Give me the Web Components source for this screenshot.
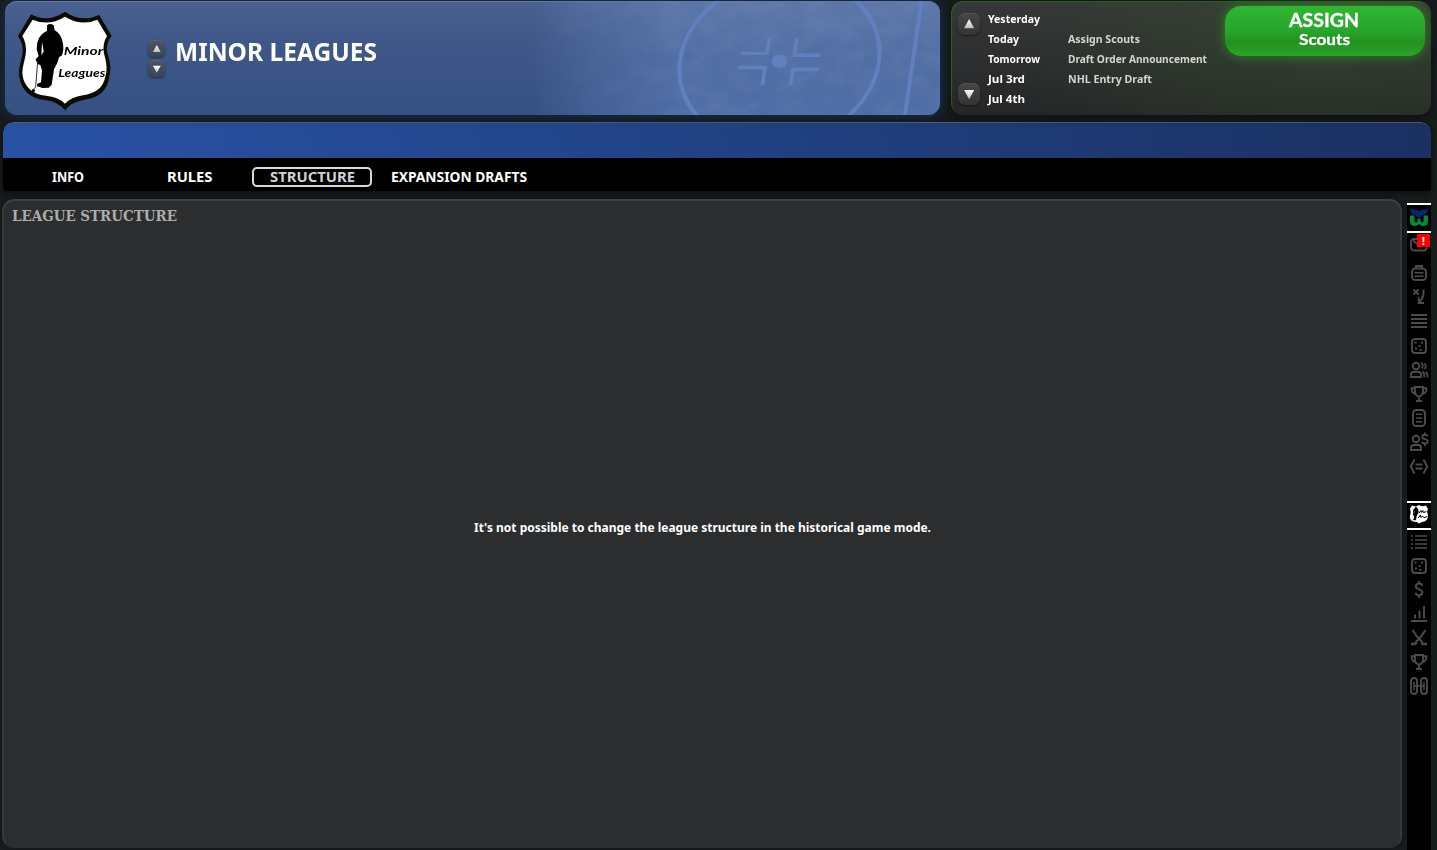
<!DOCTYPE html>
<html lang="en">
<head>
<meta charset="utf-8">
<title>Minor Leagues</title>
<style>
  html, body { margin: 0; height: 100%; overflow: hidden; background: #171c1d; }
  body { font-family: "Noto Sans", "Open Sans", sans-serif; color: #fff; }
</style>
</head>
<body>
<league-screen></league-screen>

<script>
const shield = `
  <path d="M63 28 Q112 55 165 20 Q218 55 267 29 L305 93 Q285 118 292 145 C299 165 305 190 298 214 C292 262 260 280 220 285 Q184 291 166 316 Q145 290 105 285 C60 281 33 253 28 215 C23 185 39 160 38 132 Q37 112 24 94 Z" fill="#0c0b02"/>
  <path d="M68 44 Q116 65 165 35 Q214 65 262 44 L291 93 Q276 117 282 146 C288 166 293 190 287 211 C280 252 253 266 219 271 Q183 277 165 296 Q144 275 108 272 C68 270 43 244 38 213 C34 186 49 160 48 132 Q47 110 37 93 Z" fill="#fff"/>
  <path d="M111 61 Q120 53 131 61 L134 76 Q153 86 158 112 Q163 131 156 151 L147 157 Q144 175 132 193 L125 239 L116 248 L98 249 L81 244 L82 236 L93 232 L96 196 L91 180 L82 177 L77 163 L86 153 L80 133 Q79 92 111 77 Z" fill="#000"/>
  <path d="M96 110 L94 151 L101 139 Z" fill="#fff"/>
  <path d="M83 170 L77 246 L70 253" fill="none" stroke="#333" stroke-width="3"/>
  <circle cx="70" cy="257" r="5"/>`;

const trophy = '<path d="M8 5h8v5q-.5 4-4 4.500q-3.500-.5-4-4.500zM7.500 6.200H4.500q0 5.300 5 6M16.500 6.200h3q0 5.300-5 6M12 14.500V19M9 19h6"/>';
const dice = '<rect x="5" y="5" width="14" height="14" rx="3"/><path d="M7.500 8.500h2M14 8.500h2M11.500 12h2M8 14.500h2M12.500 16h2"/>';

const icons = {
  mail: '<rect x="4" y="6" width="15.500" height="11.500" rx="3"/><path d="M6 7.500l6 5 6-5"/>',
  clipboard: '<path d="M9 7.500V5h6v2.500"/><rect x="5" y="7.500" width="14" height="11.500" rx="3.500"/><path stroke-width="1.500" d="M7.500 11.700h9M7.500 15.300h9"/>',
  tactics: '<path d="M6.500 4.500l5 5M11.500 4.500l-5 5M16.500 4.500q.8 8-4 12.500M11.800 12.500V18H17"/>',
  lines: '<path d="M4 6h16M4 10h16M4 14h16M4 18h16"/>',
  dice,
  people: '<circle cx="9" cy="8" r="3.300"/><path d="M4 19v-2.200q0-3 3-3h4q3 0 3 3V19z"/><path stroke-width="1.700" d="M13.700 4.800q3.500 1.200 1 5.700M17.200 5.500q3 2 .3 5.500M15.500 13.500q2.300 2 1.800 6M18.500 14q2.500 2 2 5.500"/>',
  trophy,
  doc: '<rect x="6" y="4" width="12" height="16" rx="3.500"/><path stroke-width="1.500" d="M9 8.300h6M9 12h6M9 15.700h6"/>',
  agent: '<circle cx="9" cy="9" r="3.200"/><path d="M4 20v-2.300q0-2.700 3-2.700h4q3 0 3 2.700V20zM20.500 6.200q-.5-1.500-2.600-1.500-2.600 0-2.600 2.200c0 3 5.300 1.300 5.300 4.400 0 2.800-5 2.900-5.600.4M17.900 2.500v2M17.900 13.500v2.500"/>',
  salary: '<path d="M7.500 5.500L3.800 12.500l3.700 7M16.500 5.500l3.700 7-3.700 7M8.500 10.500h7M8.500 14.500h7"/>',
  bullets: '<path stroke-width="1.700" d="M4 6h2M8 6h12M4 10h2M8 10h12M4 14h2M8 14h12M4 18h2M8 18h12"/>',
  dollar: '<path d="M15.200 7.800q-.3-2.300-3.200-2.300t-3.200 2.700c0 4 6.500 2.500 6.500 6.300 0 3.500-6.400 3.500-6.800.2M12 3v2.500M12 17.300V20"/>',
  chart: '<path d="M8 12.500v4M12.500 8.500v8M17 4v12.500M4 19h16"/>',
  sticks: '<path d="M5.500 4q4 7 10 12.500M18.500 4q-4 7-10 12.500"/><path stroke-width="2.600" d="M4 18h4.200l1.500-1.500M20 18h-4.200l-1.500-1.500"/>',
  rink: '<rect x="4" y="4" width="6" height="16" rx="3"/><rect x="14" y="4" width="6" height="16" rx="3"/><path stroke-width="1.500" d="M7 8v8M17 8v8M7 12h10"/>'
};

// One line of text, squeezed or stretched to the width attribute
class GameText extends HTMLElement {
  constructor() {
    super();
    this.attachShadow({ mode: 'open' });
  }

  connectedCallback() {
    const size = this.getAttribute('size') || 11;
    const width = Number(this.getAttribute('width'));
    this.shadowRoot.innerHTML = `
      <style>
        :host { display: inline-block; width: ${width}px; white-space: nowrap; flex: none; }
        span { display: inline-block; font-size: ${size}px; font-weight: bold; transform-origin: 0 50%; }
      </style>
      <span><slot></slot></span>
    `;
    const span = this.shadowRoot.querySelector('span');
    const natural = span.getBoundingClientRect().width;
    if (natural) span.style.transform = `scaleX(${width / natural})`;
  }
}

class StepButton extends HTMLElement {
  constructor() {
    super();
    this.attachShadow({ mode: 'open' });
  }

  connectedCallback() {
    const d = this.hasAttribute('down') ? 'M5 6h10L10 15z' : 'M5 14h10L10 5z';
    this.shadowRoot.innerHTML = `
      <style>
        :host {
          display: flex; align-items: center; justify-content: center;
          width: var(--step, 22px); height: var(--step, 22px);
          border-radius: 32%;
          background: linear-gradient(var(--step-top, #464646), var(--step-bottom, #343434));
          box-shadow: 0 1px 2px rgba(0, 0, 0, .55), inset 0 1px 0 rgba(255, 255, 255, .08);
        }
        svg { width: 92%; height: 92%; }
      </style>
      <svg viewBox="0 0 20 20">
        <defs><linearGradient id="g" x2="0" y2="1"><stop stop-color="#fff"/><stop offset="1" stop-color="#bbb"/></linearGradient></defs>
        <path d="${d}" fill="url(#g)"/>
      </svg>
    `;
  }
}

class LeagueHeader extends HTMLElement {
  constructor() {
    super();
    this.attachShadow({ mode: 'open' });
    this.shadowRoot.innerHTML = `
      <style>
        :host {
          display: grid; box-sizing: border-box; width: 935px; height: 114px;
          border-radius: 12px; overflow: hidden;
          background: linear-gradient(#4a6191, #3f5889 35%, #375083);
          box-shadow: 0 0 12px #1b3058, inset 0 1px 0 #6478a1;
        }
        :host > * { grid-area: 1 / 1; }
        .ice { width: 935px; height: 114px; }
        .content { display: flex; align-items: flex-start; z-index: 1; }
        .logo { width: 110px; height: 110px; margin: 4px 0 0 5px; }
        .logo text { font: italic bold 33px Lato, sans-serif; fill: #000; }
        .steps {
          display: flex; flex-direction: column; gap: 3px; margin: 39px 0 0 28px;
          --step: 17px; --step-top: #4d5566; --step-bottom: #3b4455;
        }
        .title { margin: 33px 0 0 10px; line-height: 34px; }
      </style>
      <svg class="ice" viewBox="0 0 935 114">
        <defs>
          <linearGradient id="fade"><stop offset=".56" stop-color="#000"/><stop offset=".62" stop-color="#777"/><stop offset=".72" stop-color="#fff"/></linearGradient>
          <mask id="m"><rect width="935" height="114" fill="url(#fade)"/></mask>
          <linearGradient id="sheet" x2="0" y2="1"><stop stop-color="#5c76a8"/><stop offset=".5" stop-color="#516ea5"/><stop offset="1" stop-color="#4e6ca6"/></linearGradient>
          <filter id="scuff" x="0" y="0" width="100%" height="100%">
            <feTurbulence type="fractalNoise" baseFrequency=".04 .06" numOctaves="6" seed="8"/>
            <feColorMatrix values="0 0 0 0 .46  0 0 0 0 .54  0 0 0 0 .66  1 0 0 0 -.3"/>
          </filter>
        </defs>
        <g mask="url(#m)">
          <rect width="935" height="114" fill="url(#sheet)"/>
          <rect width="935" height="114" filter="url(#scuff)" opacity=".15"/>
          <g fill="none" stroke="#6180bf" stroke-width="4">
            <ellipse rx="99.500" ry="84" transform="translate(774.500 60.300) skewX(-7)"/>
            <path stroke-width="3.600" d="M735.800 52.300H762L764.500 36.500M733.500 66.500H760L757.500 84M815.500 54.300H789.500L792 37M813.500 68.500H788L785.500 84"/>
            <path d="M916.500 0L900 114"/>
          </g>
          <ellipse cx="774.500" cy="60.300" rx="7.800" ry="6.700" fill="#6180bf"/>
        </g>
      </svg>
      <div class="content">
        <svg class="logo" viewBox="0 0 330 330">
          ${shield}
          <text x="161" y="151" textLength="119" lengthAdjust="spacingAndGlyphs">Minor</text>
          <text x="145" y="217" textLength="141" lengthAdjust="spacingAndGlyphs">Leagues</text>
        </svg>
        <div class="steps"><step-button></step-button><step-button down></step-button></div>
        <game-text class="title" size="25.500" width="202">MINOR LEAGUES</game-text>
      </div>
    `;
  }
}

class ScheduleCard extends HTMLElement {
  constructor() {
    super();
    this.attachShadow({ mode: 'open' });
    // day, its width, event, its width
    const days = [
      ['Yesterday', 52, '', 0],
      ['Today', 31, 'Assign Scouts', 72],
      ['Tomorrow', 52, 'Draft Order Announcement', 139],
      ['Jul 3rd', 37, 'NHL Entry Draft', 84],
      ['Jul 4th', 37, '', 0]
    ];
    const rows = days.map(([day, w, event, ew]) => `
      <div class="row">
        <game-text size="11" width="${w}">${day}</game-text>
        ${event ? `<game-text class="event" size="11" width="${ew}">${event}</game-text>` : ''}
      </div>
    `).join('');

    this.shadowRoot.innerHTML = `
      <style>
        :host {
          display: flex; box-sizing: border-box; width: 480px; height: 114px;
          padding: 5px 6px 0 7px; border-radius: 12px;
          background:
            radial-gradient(ellipse 330px 170px at 78% 20%, rgba(60, 90, 45, .38), rgba(50, 75, 38, .25) 60%, transparent),
            linear-gradient(#363739, #252628);
          box-shadow: inset 1px 1px 1px #2e5d23, 0 2px 8px #0c0f10;
        }
        .steps { display: flex; flex-direction: column; justify-content: space-between; height: 92px; margin-top: 7px; }
        .days { margin: 1px 0 0 8px; width: 237px; }
        .row { display: grid; grid-template-columns: 80px 1fr; height: 20px; line-height: 20px; }
        .event { color: #d3d5d2; }
        .assign {
          display: flex; flex-direction: column; align-items: center;
          box-sizing: border-box; width: 200px; height: 50px; padding: 5px 5px 0 0;
          border: 0; border-radius: 16px; color: #fff;
          font-family: Lato, "Noto Sans", sans-serif;
          background: linear-gradient(#30b632, #28a52b 50%, #24901f 72%, #29a629);
          box-shadow: 0 0 12px rgba(38, 165, 35, .75);
        }
        .assign game-text { line-height: 18px; -webkit-text-stroke: .3px #fff; }
        .assign game-text + game-text { line-height: 18px; margin-top: -1px; }
      </style>
      <div class="steps"><step-button></step-button><step-button down></step-button></div>
      <div class="days">${rows}</div>
      <button class="assign">
        <game-text size="18.500" width="70">ASSIGN</game-text>
        <game-text size="15.500" width="51">Scouts</game-text>
      </button>
    `;
  }
}

class TabBar extends HTMLElement {
  constructor() {
    super();
    this.attachShadow({ mode: 'open' });
    this.shadowRoot.innerHTML = `
      <style>
        :host {
          display: block; height: 69px; border-radius: 10px 10px 4px 4px; overflow: hidden;
          background: #000; box-shadow: 0 2px 7px #0a0d0e;
        }
        .band {
          height: 36px; box-sizing: border-box; border-radius: 10px 10px 0 0;
          border-top: 1px solid #505e80; border-left: 1px solid #385489;
          background: linear-gradient(90deg, #2952a5, #1a3162);
        }
        nav { display: flex; gap: 2px; padding: 9px 0 0 5px; }
        .tab {
          display: flex; justify-content: center; align-items: center; box-sizing: border-box;
          width: 120px; height: 20px; border: 2px solid transparent; border-radius: 5px; line-height: 16px;
          padding-bottom: 2px;
        }
        .tab.active { border-color: #d8d8da; color: #d0d2d7; }
        .tab.wide { width: 170px; }
      </style>
      <div class="band"></div>
      <nav>
        <div class="tab"><game-text size="14" width="32">INFO</game-text></div>
        <div class="tab"><game-text size="14" width="45.500">RULES</game-text></div>
        <div class="tab active"><game-text size="14" width="85">STRUCTURE</game-text></div>
        <div class="tab wide"><game-text size="14" width="136">EXPANSION DRAFTS</game-text></div>
      </nav>
    `;
  }
}

class ContentPanel extends HTMLElement {
  constructor() {
    super();
    this.attachShadow({ mode: 'open' });
    this.shadowRoot.innerHTML = `
      <style>
        :host {
          display: flex; flex-direction: column; box-sizing: border-box;
          width: 1400px; height: 649px; padding: 7px 8px 0;
          border: 2px solid #37393b; border-top-color: #3d4042; border-bottom-color: #2a2c2e;
          border-radius: 12px; background: #2c2d2f; box-shadow: 0 0 4px #101314;
        }
        header { line-height: 16px; font-family: "DejaVu Serif", serif; color: #acacac; height: 16px; }
        .body { display: flex; justify-content: center; padding: 290px 0 0; line-height: 24px; }
      </style>
      <header><slot name="title"></slot></header>
      <div class="body"><slot></slot></div>
    `;
  }
}

class SideIcon extends HTMLElement {
  constructor() {
    super();
    this.attachShadow({ mode: 'open' });
  }

  connectedCallback() {
    const badge = this.getAttribute('badge');
    this.shadowRoot.innerHTML = `
      <style>
        :host { display: block; position: relative; width: 24px; height: 24px; flex: none; }
        svg { display: block; width: 24px; height: 24px; fill: none; stroke: #4c4c4c; stroke-width: 1.900; }
        .badge {
          position: absolute; left: 10px; top: 1px; width: 13px; height: 13px;
          background: #f00; color: #fff; font-size: 10px; font-weight: bold; line-height: 15px; text-align: center;
        }
      </style>
      <svg viewBox="0 0 24 24">${icons[this.getAttribute('name')]}</svg>
      ${badge ? `<div class="badge">${badge}</div>` : ''}
    `;
  }
}

class SideBar extends HTMLElement {
  constructor() {
    super();
    this.attachShadow({ mode: 'open' });
    const list = names => names.map(name => `<side-icon class="${name}" name="${name}"></side-icon>`).join('');
    this.shadowRoot.innerHTML = `
      <style>
        :host { display: flex; flex-direction: column; width: 24px; height: 647px; background: #000; }
        .crest {
          display: flex; align-items: center; justify-content: center; box-sizing: border-box;
          height: 30px; padding-bottom: 2px; border-top: 2px solid #fff; border-bottom: 2px solid #fff; flex: none;
        }
        .crest svg { width: 20px; height: 20px; }
        .team { display: flex; flex-direction: column; height: 298px; flex: none; }
        .clipboard { margin-top: 4px; }
        .team .dice { margin-top: 1px; }
        .league { height: 29px; padding-bottom: 3px; }
      </style>
      <div class="team">
        <div class="crest">
          <svg viewBox="0 0 20 20">
            <path d="M1 8.500h4.500v5q0 2 1.500 2 1.500 0 1.500-2v-2h3v2q0 2 1.500 2 1.500 0 1.500-2v-5H19V14q0 5-5 5-2.500 0-4-1.700Q8.500 19 6 19 1 19 1 14z" fill="#078a38"/>
            <path d="M.8 1Q2 2.500 5 2.500q3.500 0 5 2Q11.500 2.500 15 2.500q3 0 4.200-1.500 0 5-3.700 6.200-3 .8-4 3.300h-3q-1-2.500-4-3.300Q.8 6 .8 1z" fill="#062378"/>
          </svg>
        </div>
        <side-icon name="mail" badge="!"></side-icon>
        ${list(['clipboard', 'tactics', 'lines', 'dice', 'people', 'trophy', 'doc', 'agent', 'salary'])}
      </div>
      <div class="crest league">
        <svg viewBox="25 22 280 280" preserveAspectRatio="none">${shield}<path d="M168 147l24-35 8 28 20-25 5 26 45-12M155 218l28-42 7 32 30-13 15 20 45-18" fill="none" stroke="#000" stroke-width="14"/></svg>
      </div>
      ${list(['bullets', 'dice', 'dollar', 'chart', 'sticks', 'trophy', 'rink'])}
    `;
  }
}

class LeagueScreen extends HTMLElement {
  constructor() {
    super();
    this.attachShadow({ mode: 'open' });
    this.shadowRoot.innerHTML = `
      <style>
        :host { display: block; width: 1437px; height: 850px; overflow: hidden; background: #171c1d; }
        .top { display: flex; gap: 11px; padding: 1px 6px 0 5px; }
        tab-bar { margin: 7px 6px 0 3px; }
        .main { display: flex; padding: 8px 0 0 2px; }
        side-bar { margin: 4px 0 0 5px; }
      </style>
      <div class="top">
        <league-header></league-header>
        <schedule-card></schedule-card>
      </div>
      <tab-bar></tab-bar>
      <div class="main">
        <content-panel>
          <game-text slot="title" size="14" width="165">LEAGUE STRUCTURE</game-text>
          <game-text size="13" width="457">It's not possible to change the league structure in the historical game mode.</game-text>
        </content-panel>
        <side-bar></side-bar>
      </div>
    `;
  }
}

customElements.define('league-screen', LeagueScreen);
customElements.define('league-header', LeagueHeader);
customElements.define('schedule-card', ScheduleCard);
customElements.define('tab-bar', TabBar);
customElements.define('content-panel', ContentPanel);
customElements.define('side-bar', SideBar);
customElements.define('side-icon', SideIcon);
customElements.define('step-button', StepButton);
customElements.define('game-text', GameText);
</script>
</body>
</html>
